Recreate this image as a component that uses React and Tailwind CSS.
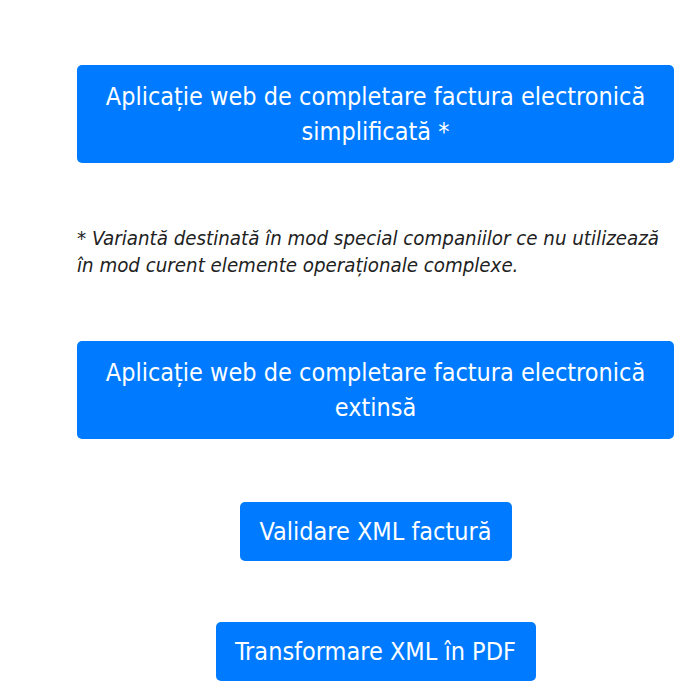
import React from 'react';

const font = { fontFamily: '"DejaVu Sans Condensed", "DejaVu Sans", sans-serif' };

function BlueButton({ children, className = '' }) {
  return (
    <a
      href="#"
      className={`block rounded-[5px] bg-[#007bff] text-center text-[25px] leading-[35px] text-white ${className}`}
    >
      {children}
    </a>
  );
}

export default function App() {
  return (
    <div className="min-h-[700px] bg-white" style={font}>
      <div className="ml-[77px] w-[597px] pt-[65px]">
        <BlueButton className="px-3 py-[14px]">
          Aplicație web de completare factura electronică simplificată *
        </BlueButton>

        <p className="mt-[62px] text-[20.3px] italic leading-[27px] text-[#222]">
          * Variantă destinată în mod special companiilor ce nu utilizează
          <br />
          în mod curent elemente operaționale complexe.
        </p>

        <BlueButton className="mt-[62px] px-3 py-[14px]">
          Aplicație web de completare factura electronică extinsă
        </BlueButton>

        <div className="mt-[63px] flex justify-center">
          <BlueButton className="w-[272px] py-3">Validare XML factură</BlueButton>
        </div>

        <div className="mt-[61px] flex justify-center">
          <BlueButton className="w-[320px] py-3">Transformare XML în PDF</BlueButton>
        </div>
      </div>
    </div>
  );
}
